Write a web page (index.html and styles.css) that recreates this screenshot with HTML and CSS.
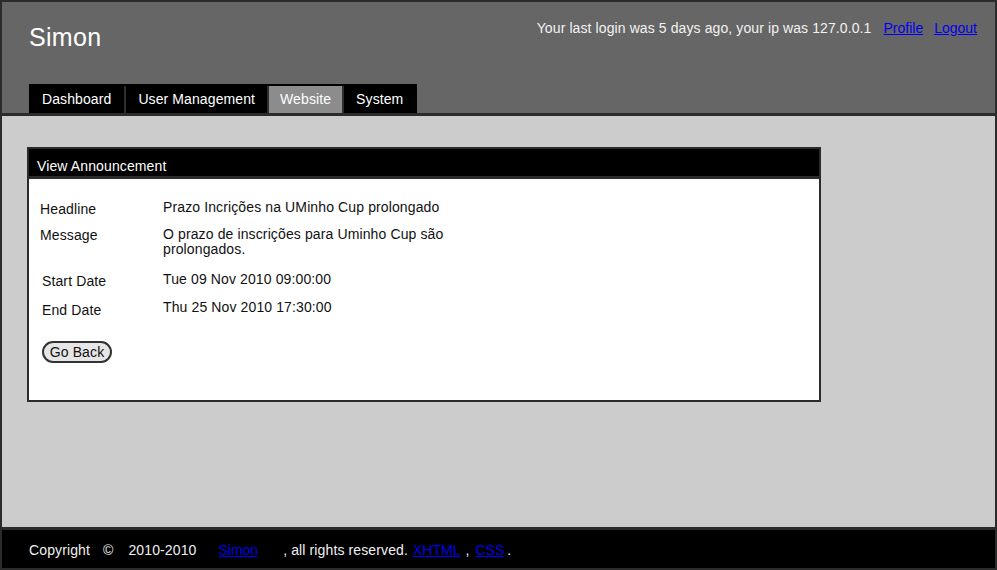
FILE: index.html
```html
<!DOCTYPE html>
<html>
<head>
<meta charset="utf-8">
<title>Simon</title>
<link rel="stylesheet" href="styles.css">
</head>
<body>
<div class="page">
  <header class="header">
    <div class="top">
      <div class="brand">Simon</div>
      <div class="userinfo">
        <span class="login">Your last login was 5 days ago, your ip was 127.0.0.1</span>
        <a href="#" class="ulink">Profile</a>
        <a href="#" class="ulink">Logout</a>
      </div>
    </div>
    <nav class="nav">
      <a href="#" class="tab">Dashboard</a>
      <a href="#" class="tab">User Management</a>
      <a href="#" class="tab active">Website</a>
      <a href="#" class="tab">System</a>
    </nav>
  </header>
  <main class="content">
    <section class="panel">
      <div class="panel-title">View Announcement</div>
      <div class="panel-body">
        <div class="row r-headline">
          <div class="label">Headline</div>
          <div class="value">Prazo Incrições na UMinho Cup prolongado</div>
        </div>
        <div class="row r-message">
          <div class="label label-msg">Message</div>
          <div class="value">O prazo de inscrições para Uminho Cup são prolongados.</div>
        </div>
        <div class="row r-start">
          <div class="label label-date">Start Date</div>
          <div class="value">Tue 09 Nov 2010 09:00:00</div>
        </div>
        <div class="row r-end">
          <div class="label label-date label-end">End Date</div>
          <div class="value">Thu 25 Nov 2010 17:30:00</div>
        </div>
        <button class="btn" type="button">Go Back</button>
      </div>
    </section>
  </main>
  <footer class="footer">
    <span class="f-copy">Copyright</span>
    <span class="f-sym">©</span>
    <span class="f-year">2010-2010</span>
    <a href="#" class="f-link f-simon">Simon</a>
    <span class="f-rights">, all rights reserved.</span>
    <a href="#" class="f-link f-xhtml">XHTML</a>
    <span class="f-comma">,</span>
    <a href="#" class="f-link f-css">CSS</a>
    <span class="f-dot">.</span>
  </footer>
</div>
</body>
</html>
```

FILE: styles.css
```css
* { box-sizing: border-box; }
html, body { margin: 0; padding: 0; }
body {
  font-family: "Liberation Sans", Arial, sans-serif;
  font-size: 14px;
  letter-spacing: 0.12px;
  background: #2b2b2b;
}
.page {
  width: 997px;
  height: 570px;
  border: 2px solid #2b2b2b;
  display: flex;
  flex-direction: column;
  overflow: hidden;
}
.header {
  background: #666666;
  height: 114px;
  border-bottom: 3px solid #2b2b2b;
  padding: 0 18px 0 27px;
  display: flex;
  flex-direction: column;
}
.top {
  display: flex;
  justify-content: space-between;
  align-items: flex-start;
}
.brand {
  color: #ffffff;
  font-size: 25px;
  letter-spacing: 0.3px;
  line-height: 28px;
  margin-top: 21px;
}
.userinfo {
  margin-top: 18px;
  color: #f2f2f2;
  line-height: 17px;
  letter-spacing: 0.1px;
  display: flex;
}
.ulink {
  color: #0000ee;
  text-decoration: underline;
  letter-spacing: 0;
  margin-left: 12px;
}
.ulink + .ulink { margin-left: 11px; }
.nav {
  margin-top: 33px;
  align-self: flex-start;
  display: flex;
  background: #000;
  padding-top: 2px;
  height: 29px;
}
.tab {
  color: #fff;
  text-decoration: none;
  letter-spacing: 0.1px;
  line-height: 27px;
  height: 27px;
  padding: 0 12px 0 12px;
  border-left: 2px solid #2e2e2e;
}
.tab:first-child { border-left: none; padding-left: 13px; padding-right: 13px; }
.tab:last-child { padding-right: 14px; }
.tab.active { background: #8c8c8c; padding: 0 11px; }
.content {
  flex: 1;
  background: #cccccc;
  padding: 31px 0 0 25px;
}
.panel {
  width: 794px;
  border: 2px solid #2b2b2b;
  background: #fff;
}
.panel-title {
  background: #000;
  color: #fff;
  height: 30px;
  border-bottom: 3px solid #2b2b2b;
  padding: 9px 8px 0;
  line-height: 17px;
}
.panel-body {
  padding: 21px 11px 36px;
  height: 221px;
}
.row {
  display: flex;
  align-items: flex-start;
  color: #111;
}
.label {
  width: 123px;
  flex: none;
  line-height: 15px;
  padding-top: 2px;
}
.label-msg { padding-top: 1px; }
.label-date { padding-left: 2px; padding-top: 2px; }
.label-end { padding-top: 3px; }
.value {
  width: 300px;
  line-height: 15px;
}
.r-message { margin-top: 10px; }
.r-start { margin-top: 15px; }
.r-end { margin-top: 11px; }
.btn {
  display: block;
  margin: 23px 0 0 2px;
  width: 70px;
  height: 22px;
  border: 2px solid #333;
  border-radius: 11px;
  background: #e6e6e6;
  font-family: "Liberation Sans", Arial, sans-serif;
  font-size: 14px;
  letter-spacing: 0.12px;
  color: #111;
  padding: 0;
  line-height: 18px;
}
.footer {
  height: 41px;
  border-top: 3px solid #2b2b2b;
  background: #000;
  color: #f0f0f0;
  display: flex;
  align-items: center;
  padding: 2px 0 0 27px;
  white-space: nowrap;
}
.f-link { color: #0000ee; text-decoration: underline; letter-spacing: 0; }
.f-sym { margin-left: 13px; }
.f-year { margin-left: 15px; }
.f-simon { margin-left: 22px; }
.f-rights { margin-left: 25px; }
.f-xhtml { margin-left: 5px; }
.f-comma { margin-left: 5px; }
.f-css { margin-left: 6px; }
.f-dot { margin-left: 3px; }
```
